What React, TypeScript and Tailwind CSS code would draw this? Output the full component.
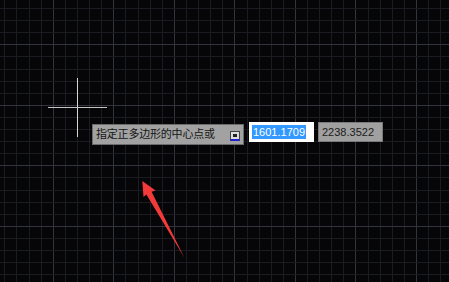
import React from "react";

const W = 449;
const H = 282;

function Grid() {
    const xs: { v: number; major: boolean }[] = [];
    for (let i = 0; 4.3 + 12.11 * i < W; i++) {
        xs.push({ v: Math.round(4.3 + 12.11 * i), major: i % 5 === 4 });
    }
    const ys: { v: number; major: boolean }[] = [];
    for (let j = 0; 8 + 12.1 * j < H; j++) {
        ys.push({ v: Math.round(8 + 12.1 * j), major: j % 5 === 3 });
    }

    return (
        <svg width={W} height={H} className="absolute inset-0" shapeRendering="crispEdges">
            {xs.map((l, i) => (
                <line key={"x" + i} x1={l.v + 0.5} y1={0} x2={l.v + 0.5} y2={H} stroke={l.major ? "#33333d" : "#1b1b22"} strokeWidth={1} />
            ))}
            {ys.map((l, j) => (
                <line key={"y" + j} x1={0} y1={l.v + 0.5} x2={W} y2={l.v + 0.5} stroke={l.major ? "#33333d" : "#1b1b22"} strokeWidth={1} />
            ))}
            {/* crosshair */}
            <line x1={77.5} y1={78} x2={77.5} y2={137} stroke="#d6d6d6" strokeWidth={1} />
            <line x1={48} y1={107.5} x2={107} y2={107.5} stroke="#c4c4c4" strokeWidth={1} />
        </svg>
    );
}

function Arrow() {
    return (
        <svg width={W} height={H} className="absolute inset-0">
            <polygon
                points="142.3,181 155.5,190.5 151.6,191.8 184.3,257.5 146.4,194.6 143.5,197"
                fill="#f23a3a"
            />
        </svg>
    );
}

export default function App() {
    return (
        <div className="relative w-[449px] h-[282px] overflow-hidden bg-[#060608]">
            <Grid />
            <Arrow />

            {/* dynamic input tooltip */}
            <div className="absolute left-[92px] top-[122px] flex items-start gap-[4px] text-[11px] leading-none" style={{ fontFamily: '"Liberation Sans", "Noto Sans CJK SC", sans-serif' }}>
                <div className="mt-[2px] w-[152px] h-[21px] bg-[#a2a2a2] border border-[#6a6a6a] flex items-center justify-between pl-[3px] pr-[3px]">
                    <span className="text-[#151515] text-[11px] tracking-[-0.2px]">指定正多边形的中心点或</span>
                    <span className="mt-[3px] w-[10px] h-[10px] bg-[#dcdcdc] border border-[#444] border-b-2 border-b-[#2222cc] flex items-center justify-center">
                        <span className="w-[4px] h-[3px] bg-[#222]" />
                    </span>
                </div>
                <div className="ml-[1px] w-[65px] h-[20px] bg-white flex items-center pl-[3px]">
                    <span className="h-[14px] px-[1px] bg-[#3399ff] text-white flex items-center text-[11px]">1601.1709</span>
                </div>
                <div className="w-[65px] h-[20px] bg-[#a0a0a0] border border-[#7a7a7a] flex items-center pl-[3px] text-[#1a1a1a]">
                    2238.3522
                </div>
            </div>
        </div>
    );
}
